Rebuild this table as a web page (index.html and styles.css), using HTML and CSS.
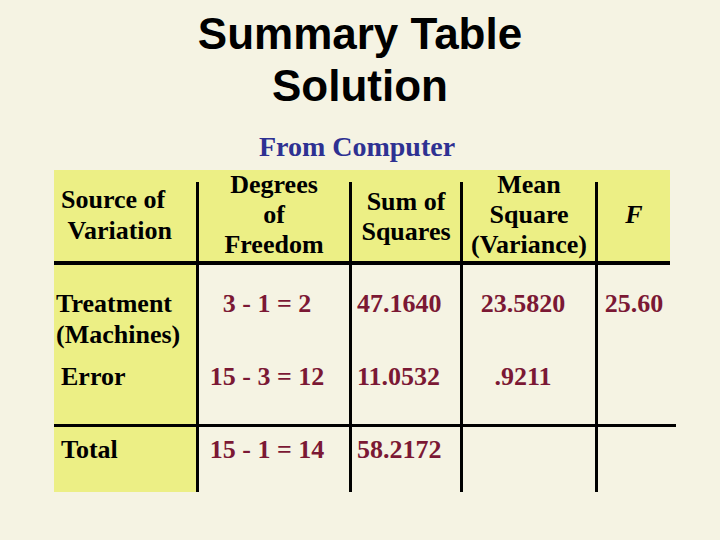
FILE: index.html
```html
<!DOCTYPE html>
<html lang="en">
<head>
<meta charset="utf-8">
<title>Summary Table Solution</title>
<link rel="stylesheet" href="styles.css">
</head>
<body>
<div class="slide">
  <h1 class="title">Summary Table<br>Solution</h1>
  <p class="subtitle">From Computer</p>
  <div class="table">
    <div class="row head">
      <div class="cell h1c">Source of<br>&nbsp;Variation</div>
      <div class="cell hc h2c">Degrees<br>of<br>Freedom</div>
      <div class="cell hc h3c">Sum of<br>Squares</div>
      <div class="cell hc h4c">Mean<br>Square<br>(Variance)</div>
      <div class="cell hc h5c"><i>F</i></div>
    </div>
    <div class="row r1">
      <div class="cell label treat">Treatment<br>(Machines)</div>
      <div class="cell val c2">3 - 1 = 2</div>
      <div class="cell val c3">47.1640</div>
      <div class="cell val c4">23.5820</div>
      <div class="cell val c5">25.60</div>
    </div>
    <div class="row r2">
      <div class="cell label">Error</div>
      <div class="cell val c2">15 - 3 = 12</div>
      <div class="cell val c3">11.0532</div>
      <div class="cell val c4">.9211</div>
      <div class="cell val c5"></div>
    </div>
    <div class="rule"></div>
    <div class="row r3">
      <div class="cell label">Total</div>
      <div class="cell val c2">15 - 1 = 14</div>
      <div class="cell val c3">58.2172</div>
      <div class="cell val c4"></div>
      <div class="cell val c5"></div>
    </div>
  </div>
</div>
</body>
</html>
```

FILE: styles.css
```css
html, body {
  margin: 0;
  padding: 0;
}
body {
  background: #f5f3e3;
  width: 720px;
  height: 540px;
  overflow: hidden;
}
.slide {
  width: 720px;
  height: 540px;
  padding-top: 8px;
  box-sizing: border-box;
}
.title {
  margin: 0;
  font-family: "Liberation Sans", Arial, sans-serif;
  font-weight: bold;
  font-size: 44px;
  line-height: 52px;
  text-align: center;
  color: #000;
}
.subtitle {
  margin: 19px 0 7px;
  font-family: "Liberation Serif", "Times New Roman", serif;
  font-weight: bold;
  font-size: 28px;
  line-height: 32px;
  text-align: center;
  color: #2e3192;
  padding-right: 6px;
}
.table {
  margin-left: 54px;
  width: 622px;
  font-family: "Liberation Serif", "Times New Roman", serif;
  font-weight: bold;
  font-size: 26px;
}
.row {
  display: grid;
  grid-template-columns: 142px 153px 111px 135px 75px;
  width: 616px;
}
.cell {
  box-sizing: border-box;
  white-space: nowrap;
}
.head {
  background: #ecef85;
  height: 91px;
  border-bottom: 4px solid #000;
  color: #000;
}
.head .cell {
  line-height: 30px;
  text-align: center;
}
.head .hc {
  padding-left: 3px;
  background: linear-gradient(#000, #000) 0 12px / 3px 100% no-repeat;
}
.head .h1c {
  text-align: left;
  padding: 14px 0 0 7px;
  line-height: 31px;
}
.head .h2c { padding-top: 0; }
.head .h3c { padding-top: 17px; }
.head .h4c { padding-top: 0; }
.head .h5c { padding-top: 30px; }
.head i { font-style: italic; }

.label {
  background: #ecef85;
  color: #000;
  padding-left: 7px;
  line-height: 31px;
}
.label.treat { padding-left: 2px; }
.val {
  border-left: 3px solid #000;
  color: #7b1834;
  line-height: 31px;
}
.c2 { text-align: center; padding-right: 14px; }
.c3 { text-align: left; padding-left: 5px; }
.c4 { text-align: center; padding-right: 12px; }
.c5 { text-align: center; }

.r1 { height: 89px; }
.r1 .cell { padding-top: 23px; }
.r2 { height: 70px; }
.r2 .cell { padding-top: 7px; }
.r3 { height: 65px; }
.r3 .cell { padding-top: 7px; }
.rule {
  height: 3px;
  width: 622px;
  background: #000;
}
```
